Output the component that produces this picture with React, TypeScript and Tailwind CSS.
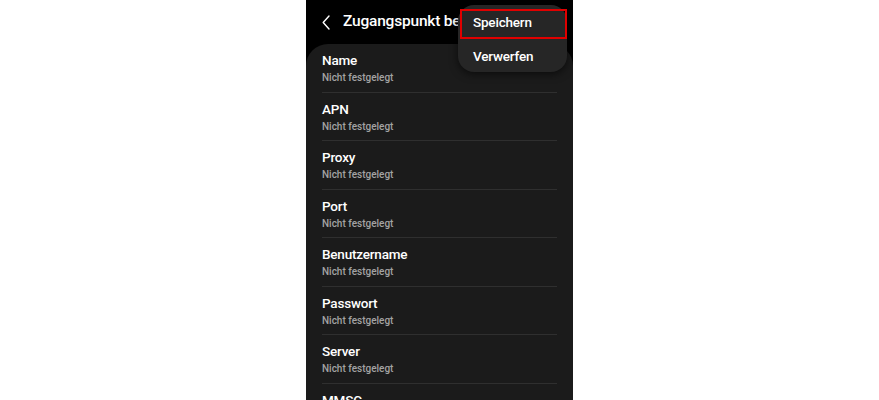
const rows = ["Name", "APN", "Proxy", "Port", "Benutzername", "Passwort", "Server", "MMSC"];

const Row = ({ title }: { title: string }) => {
  return (
    <div className="h-[48.5px] border-b border-[#2f2f2f] flex flex-col justify-center pt-[1px]">
      <div className="text-[13.5px] leading-[17px] font-medium text-white tracking-[-0.2px]">{title}</div>
      <div className="mt-[2px] text-[10px] leading-[13px] font-medium text-[#a3a3a3]">Nicht festgelegt</div>
    </div>
  );
};

export default function App() {
  return (
    <div className="w-full h-[400px] bg-white flex justify-center font-['Roboto',sans-serif]">
      <div className="relative w-[267px] h-[400px] bg-black overflow-hidden">
        <div className="h-[44px] flex items-center pl-[16px] gap-[12px]">
          <svg width="9" height="15" viewBox="0 0 9 15" fill="none">
            <path d="M7 1 L1.2 7.5 L7 14" stroke="#ffffff" strokeWidth="1.4" strokeLinecap="round" strokeLinejoin="round" />
          </svg>
          <div className="text-[15.5px] font-medium text-white whitespace-nowrap tracking-[-0.2px]">Zugangspunkt bearbeiten</div>
        </div>

        <div className="bg-[#1b1b1b] rounded-t-[22px] px-[16px]">
          {rows.map((r) => (
            <Row key={r} title={r} />
          ))}
        </div>

        <div className="absolute left-[152px] top-[5px] w-[109px] h-[67px] rounded-[16px] bg-[#262626] shadow-[0_2px_8px_rgba(0,0,0,0.6)] flex flex-col">
          <div className="h-[34px] flex items-center pl-[15px] text-[13.5px] font-medium text-white tracking-[-0.2px]">Speichern</div>
          <div className="h-[33px] flex items-center pl-[15px] pt-[2px] text-[13.5px] font-medium text-white tracking-[-0.2px]">Verwerfen</div>
        </div>
        <div className="absolute left-[154px] top-[9px] w-[107px] h-[30px] border-2 border-[#e00000]" />
      </div>
    </div>
  );
}
